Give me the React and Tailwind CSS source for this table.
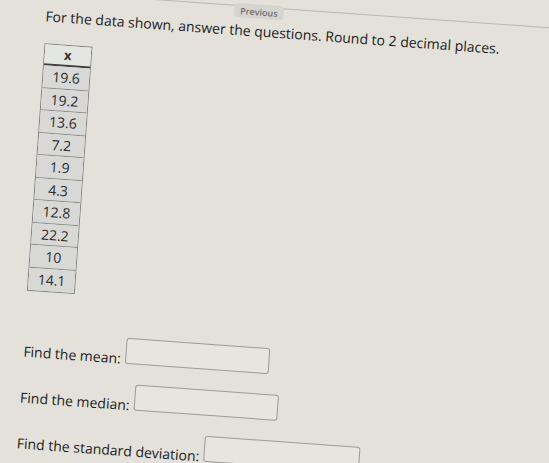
import React from "react";

const values = ["19.6", "19.2", "13.6", "7.2", "1.9", "4.3", "12.8", "22.2", "10", "14.1"];

const questions = [
  { label: "Find the mean:", width: "w-[144px]", gap: "mt-[40px]" },
  { label: "Find the median:", width: "w-[144px]", gap: "mt-[15px]" },
  { label: "Find the standard deviation:", width: "w-[156px]", gap: "mt-[15px]" },
];

const App = () => {
  return (
    <div
      className="w-[549px] h-[463px] overflow-hidden bg-[#e3e1da] text-[#1c1c1c]"
      style={{ fontFamily: '"Open Sans", "Liberation Sans", sans-serif' }}
    >
      {/* the whole page sits a little tilted, like the photo */}
      <div className="w-[720px] origin-top-left [transform:translate(1px,-20px)_rotate(4.1deg)]">
        {/* header line with the Previous tab */}
        <div className="h-[9px] border-b border-[#b9b7b0]" />
        <div className="ml-[235px] -mt-[3px] w-[49px] h-[14px] flex items-center justify-center bg-[#d5d4cf] rounded-[3px] text-[9px] font-semibold text-[#707070] leading-none">
          Previous
        </div>

        <p className="mt-[3px] pl-[47px] text-[14px] leading-5">
          For the data shown, answer the questions. Round to 2 decimal places.
        </p>

        {/* data table */}
        <div className="mt-[17px] ml-[48px] w-[48px] border border-[#7e7e7c] bg-[#f2f2f0]">
          <div className="h-[21px] flex items-center justify-center bg-[#e4e7e1] border-b-2 border-[#3f3f3f] text-[13px] font-bold text-[#333]">
            x
          </div>
          {values.map((v, i) => (
            <div
              key={i}
              className="h-[22.5px] flex items-center justify-center bg-[#d8d8d6] border-b border-[#8a8a88] last:border-b-0 text-[14px] text-[#2e2e2e]"
            >
              {v}
            </div>
          ))}
        </div>

        {/* questions */}
        {questions.map((q, i) => (
          <div key={i} className={`${q.gap} pl-[49px] flex items-end`}>
            <span className="text-[14px] leading-5">{q.label}</span>
            <div
              className={`${q.width} h-[26px] ml-[4px] mb-[5px] border border-[#9c9b96] rounded-[3px] bg-[#e7e5df]`}
            />
          </div>
        ))}
      </div>
    </div>
  );
};

export default App;
